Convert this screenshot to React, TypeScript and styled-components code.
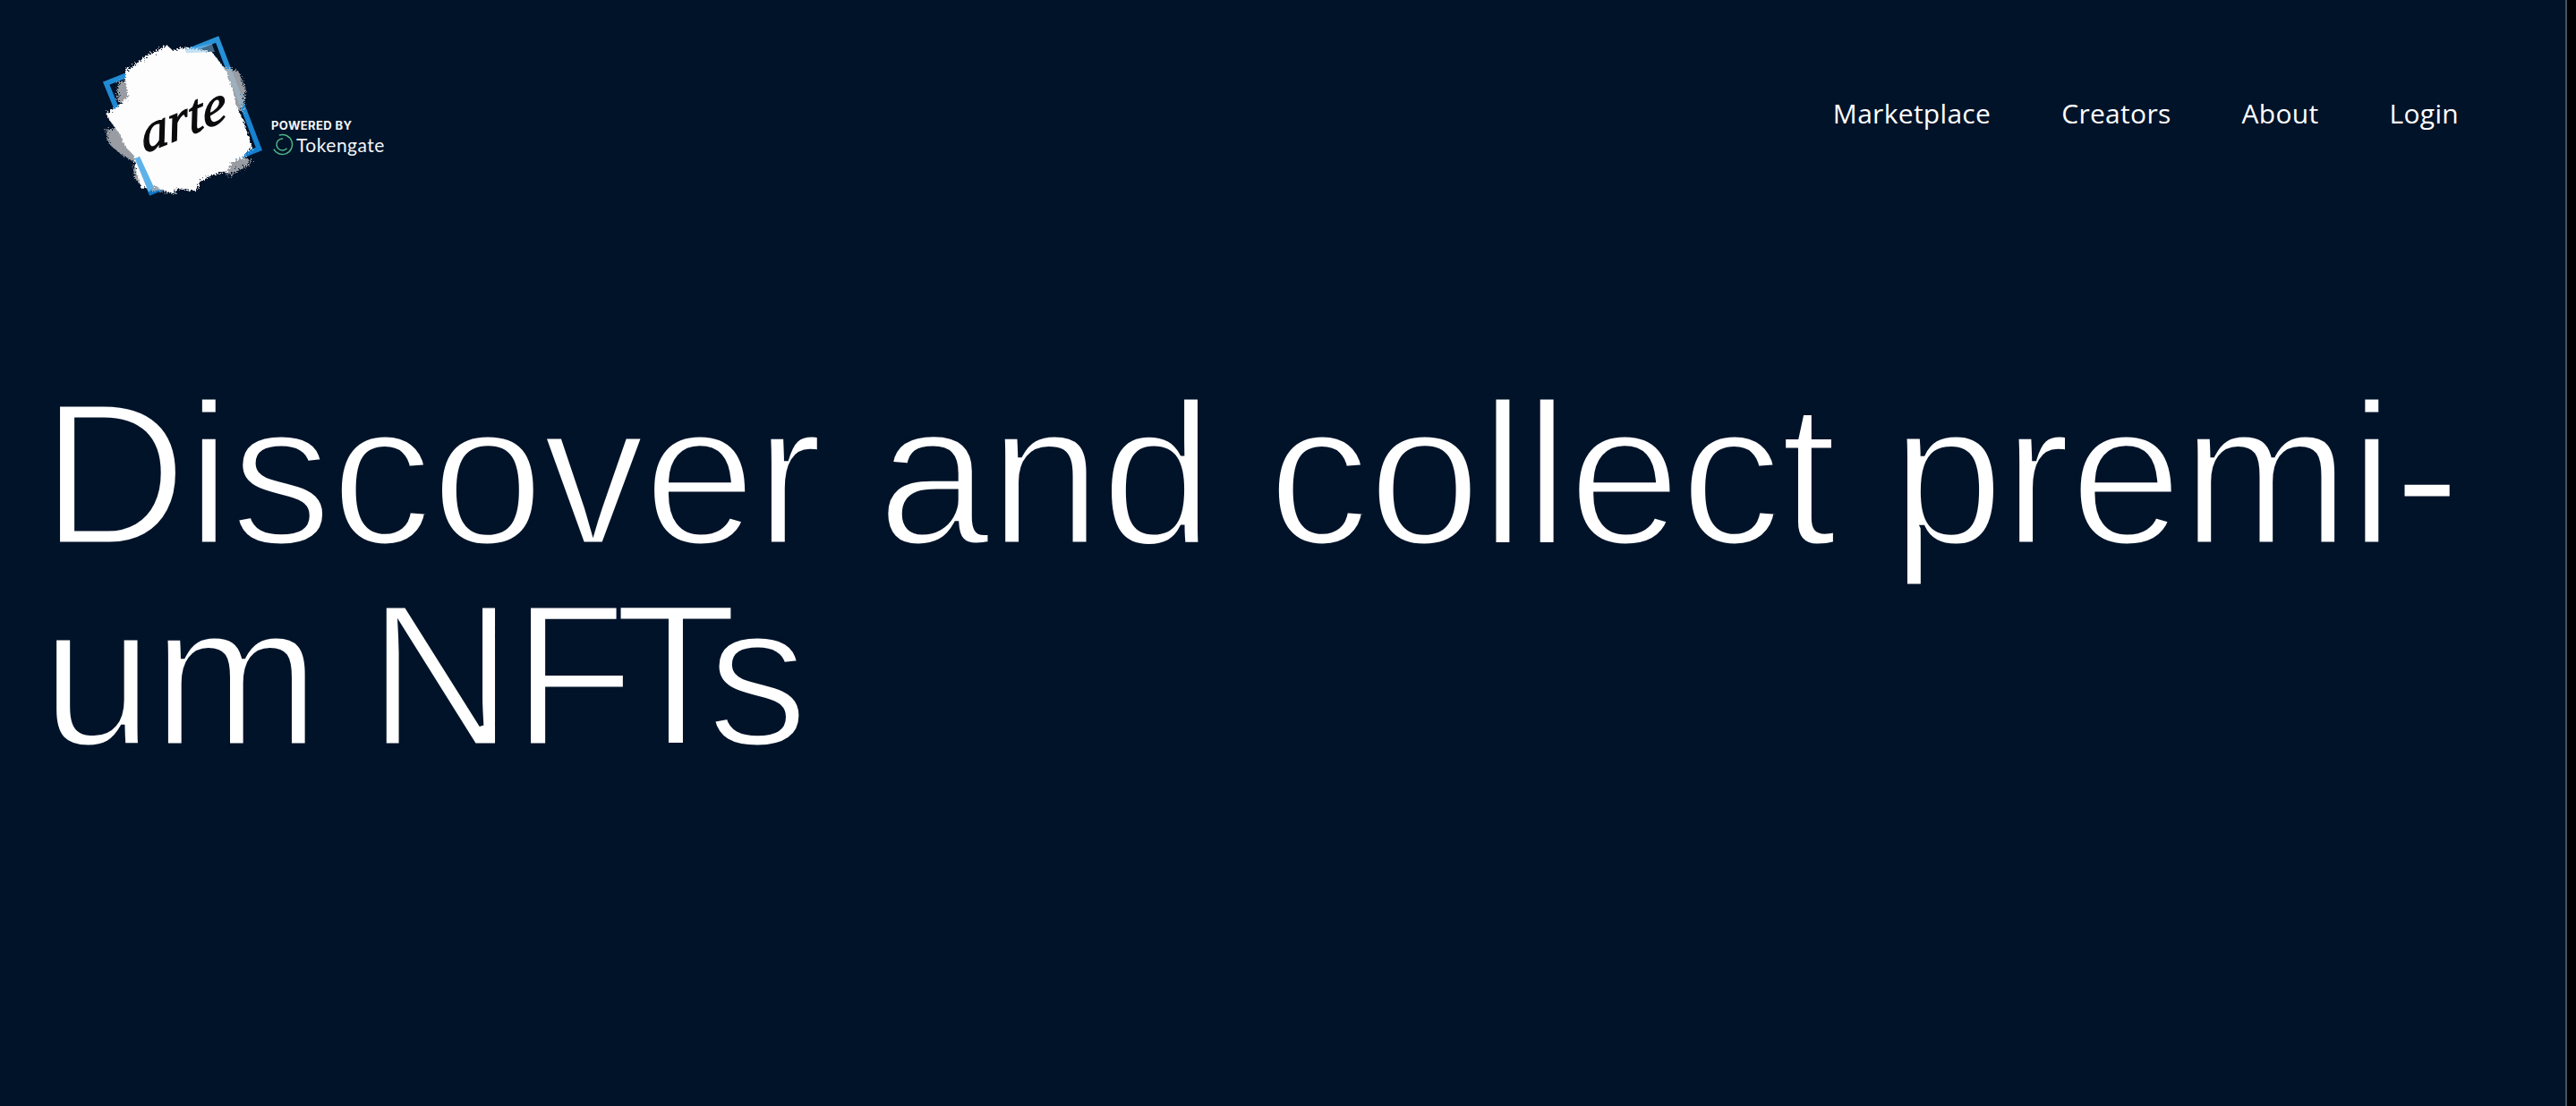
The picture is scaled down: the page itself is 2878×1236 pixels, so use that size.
import React from "react";
import styled, { createGlobalStyle } from "styled-components";

const Global = createGlobalStyle`
  html, body { margin: 0; padding: 0; background: #000; }
  #root { min-height: 100vh; }
`;

const Shell = styled.div`
  display: flex;
  min-height: 100vh;
  background: #000;
`;

const Page = styled.main`
  width: 2868px;
  box-sizing: border-box;
  height: 1236px;
  overflow: hidden;
  background: #011329;
  border-right: 2px solid #47525f;
  color: #fff;
`;

const Header = styled.header`
  display: flex;
  justify-content: space-between;
  align-items: flex-start;
  padding: 40px 119px 0 114px;
`;

const Brand = styled.div`
  display: flex;
  align-items: flex-start;
`;

const BrandMark = styled.svg`
  width: 180px;
  height: 180px;
  display: block;
  flex: none;
`;

const Powered = styled.div`
  display: flex;
  flex-direction: column;
  margin: 92px 0 0 9px;
  color: #f4f6f8;
`;

const PoweredLabel = styled.span`
  font: 700 13px/17px "Inter", "Liberation Sans", sans-serif;
  letter-spacing: 0.4px;
`;

const TokenRow = styled.div`
  display: flex;
  align-items: center;
  gap: 3px;
`;

const TokenIcon = styled.svg`
  width: 25px;
  height: 25px;
  display: block;
`;

const TokenName = styled.span`
  font: 400 21px/25px "Lato", "Liberation Sans", sans-serif;
  letter-spacing: 0.5px;
`;

const Nav = styled.nav`
  display: flex;
  gap: 79px;
  margin-top: 66px;
`;

const NavLink = styled.a`
  font: 400 30px/42px "Open Sans", "Liberation Sans", sans-serif;
  color: #fff;
  letter-spacing: 0.3px;
  white-space: nowrap;
`;

const Hero = styled.h1`
  margin: 197px 0 0;
  padding-left: 46px;
  width: 2790px;
  box-sizing: border-box;
  font: 400 226px/225px "Liberation Sans", Arial, sans-serif;
  letter-spacing: -0.85px;
  color: #fff;
  -webkit-text-stroke: 5px #011329;
  paint-order: fill stroke;
`;

const HeroLine = styled.span`
  display: block;
  white-space: nowrap;
`;

const TightLine = styled(HeroLine)`
  letter-spacing: -2px;
  word-spacing: -6px;
`;

const Kerned = styled.span<{ $pull: number }>`
  display: inline-block;
  margin-right: ${(p) => p.$pull}px;
`;

const Logo = () => (
  <BrandMark viewBox="72 58 540 540" aria-label="arte">
    <defs>
      <filter id="rough" x="-10%" y="-10%" width="120%" height="120%">
        <feTurbulence type="fractalNoise" baseFrequency="0.16" numOctaves="3" seed="4" />
        <feDisplacementMap in="SourceGraphic" scale="22" />
      </filter>
      <filter id="grain" x="-15%" y="-15%" width="130%" height="130%">
        <feTurbulence type="fractalNoise" baseFrequency="0.7" numOctaves="2" seed="9" />
        <feDisplacementMap in="SourceGraphic" scale="40" />
      </filter>
      <linearGradient id="frameBlue" x1="0" y1="0" x2="0" y2="1">
        <stop offset="0" stopColor="#2a93d8" />
        <stop offset="1" stopColor="#0a78cc" />
      </linearGradient>
    </defs>
    <polygon
      points="458,70 598,437 236,583 86,217"
      fill="none"
      stroke="url(#frameBlue)"
      strokeWidth="17"
    />
    <g filter="url(#grain)" fill="#b4b6b9" opacity="0.85">
      <polygon points="125,215 175,195 190,290 125,280" />
      <polygon points="85,375 170,350 195,490 135,455 95,420" />
      <polygon points="175,500 320,500 320,585 225,572 185,545" />
      <polygon points="470,160 528,175 555,240 540,310 490,290" />
      <polygon points="470,450 575,470 555,498 490,528" />
    </g>
    <g filter="url(#rough)">
      <polygon
        fill="#fdfdfd"
        points="150,175 190,150 225,120 250,112 288,88 310,108 345,98 400,104 440,112 470,150 490,180 512,250 525,300 545,340 575,432 540,470 510,480 490,515 440,525 400,548 385,578 330,572 300,585 250,562 205,572 185,510 180,460 150,430 130,385 100,345 85,318 115,300 130,288 160,265 150,215"
      />
    </g>
    <polygon points="350,104 440,84 450,112 355,116" fill="#8cc4ea" opacity="0.5" />
    <polygon points="182,470 198,462 246,566 228,582" fill="#5db2ea" />
    <text
      x="274"
      y="392"
      transform="rotate(-22 350 330) skewX(-14)"
      fontFamily="'Liberation Serif', serif"
      fontStyle="italic"
      fontSize="178"
      fill="#0b0b0d"
      stroke="#0b0b0d"
      strokeWidth="4"
      textLength="305"
      lengthAdjust="spacingAndGlyphs"
    >
      arte
    </text>
  </BrandMark>
);

const Tokengate = () => (
  <TokenIcon viewBox="0 0 25 25" aria-hidden="true">
    <circle cx="12.5" cy="12.5" r="11" fill="none" stroke="#4fb286" strokeWidth="1.5" strokeDasharray="50 19" transform="rotate(-110 12.5 12.5)" />
    <circle cx="12.5" cy="12.5" r="6.5" fill="none" stroke="#4fb286" strokeWidth="1.5" strokeDasharray="26 15" transform="rotate(40 12.5 12.5)" />
  </TokenIcon>
);

export default function App() {
  return (
    <>
      <Global />
      <Shell>
        <Page>
          <Header>
            <Brand>
              <Logo />
              <Powered>
                <PoweredLabel>POWERED BY</PoweredLabel>
                <TokenRow>
                  <Tokengate />
                  <TokenName>Tokengate</TokenName>
                </TokenRow>
              </Powered>
            </Brand>
            <Nav>
              <NavLink>Marketplace</NavLink>
              <NavLink>Creators</NavLink>
              <NavLink>About</NavLink>
              <NavLink>Login</NavLink>
            </Nav>
          </Header>
          <Hero>
            <HeroLine>Discover and collect premi-</HeroLine>
            <TightLine>
              um N<Kerned $pull={-22}>F</Kerned>
              <Kerned $pull={-32}>T</Kerned>s
            </TightLine>
          </Hero>
        </Page>
      </Shell>
    </>
  );
}
